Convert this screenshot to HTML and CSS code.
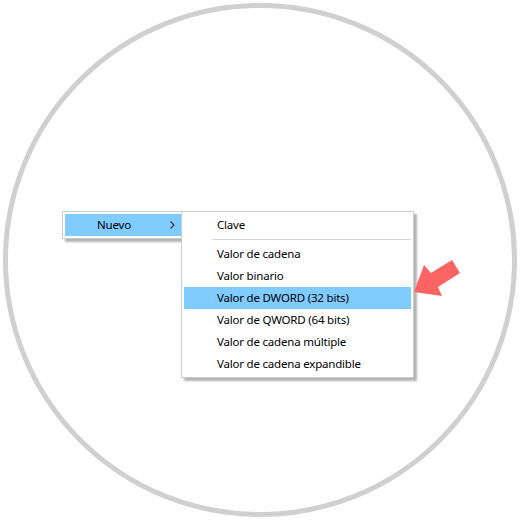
FILE: index.html
```html
<!DOCTYPE html>
<html lang="es">
<head>
    <meta charset="UTF-8">
    <meta name="viewport" content="width=device-width, initial-scale=1.0">
    <title>Nuevo valor</title>
    <link rel="stylesheet" href="styles.css">
</head>
<body>
    <div class="frame">
        <div class="menus">
            <div class="menu parent-menu">
                <div class="item active">
                    <span class="label">Nuevo</span>
                    <svg class="chevron" width="5" height="8" viewBox="0 0 5 8">
                        <polyline points="0.5,0.5 4,4 0.5,7.5" fill="none" stroke="#333" stroke-width="1.1"/>
                    </svg>
                </div>
            </div>
            <div class="menu submenu">
                <div class="item">Clave</div>
                <div class="separator"></div>
                <div class="item">Valor de cadena</div>
                <div class="item">Valor binario</div>
                <div class="item active">Valor de DWORD (32 bits)</div>
                <div class="item">Valor de QWORD (64 bits)</div>
                <div class="item">Valor de cadena múltiple</div>
                <div class="item">Valor de cadena expandible</div>
            </div>
        </div>

        <!-- annotation arrow pointing at the highlighted entry -->
        <svg class="arrow" width="60" height="45" viewBox="0 0 60 45">
            <polygon points="4,37 14,10 21,18 42,5 50,18 28,32 32,41" fill="#ff6464"/>
        </svg>
    </div>
</body>
</html>
```

FILE: styles.css
```css
body {
    margin: 0;
    background: #fff;
    font-family: "Noto Sans", "Open Sans", sans-serif;
    font-size: 11.5px;
    letter-spacing: -0.2px;
    color: #000;
}
.frame {
    position: relative;
    box-sizing: border-box;
    width: 514px;
    height: 514px;
    margin: 3px;
    border: 5px solid #d0d0d0;
    border-radius: 50%;
    padding: 203px 0 0 54px;
}
.menus {
    display: flex;
    align-items: flex-start;
}
.menu {
    background: #fff;
    border: 1px solid #cccccc;
    padding: 2px;
    box-shadow: 3px 3px 2px rgba(0,0,0,0.3);
}
.parent-menu {
    width: 116px;
    padding-right: 0;
}
.submenu {
    width: 227px;
    margin-left: -1px;
    position: relative;
}
.item {
    height: 22px;
    line-height: 22px;
    padding-left: 33px;
    white-space: nowrap;
}
.item.active {
    background: #80cbff;
}
.parent-menu .item {
    display: flex;
    align-items: center;
    padding-left: 32px;
}
.parent-menu .label {
    flex: 1;
}
.chevron {
    margin-right: 6px;
}
.separator {
    height: 1px;
    background: #d7d7d7;
    margin: 3px 0 3px 28px;
}
.arrow {
    position: absolute;
    left: 402px;
    top: 247px;
}
```
